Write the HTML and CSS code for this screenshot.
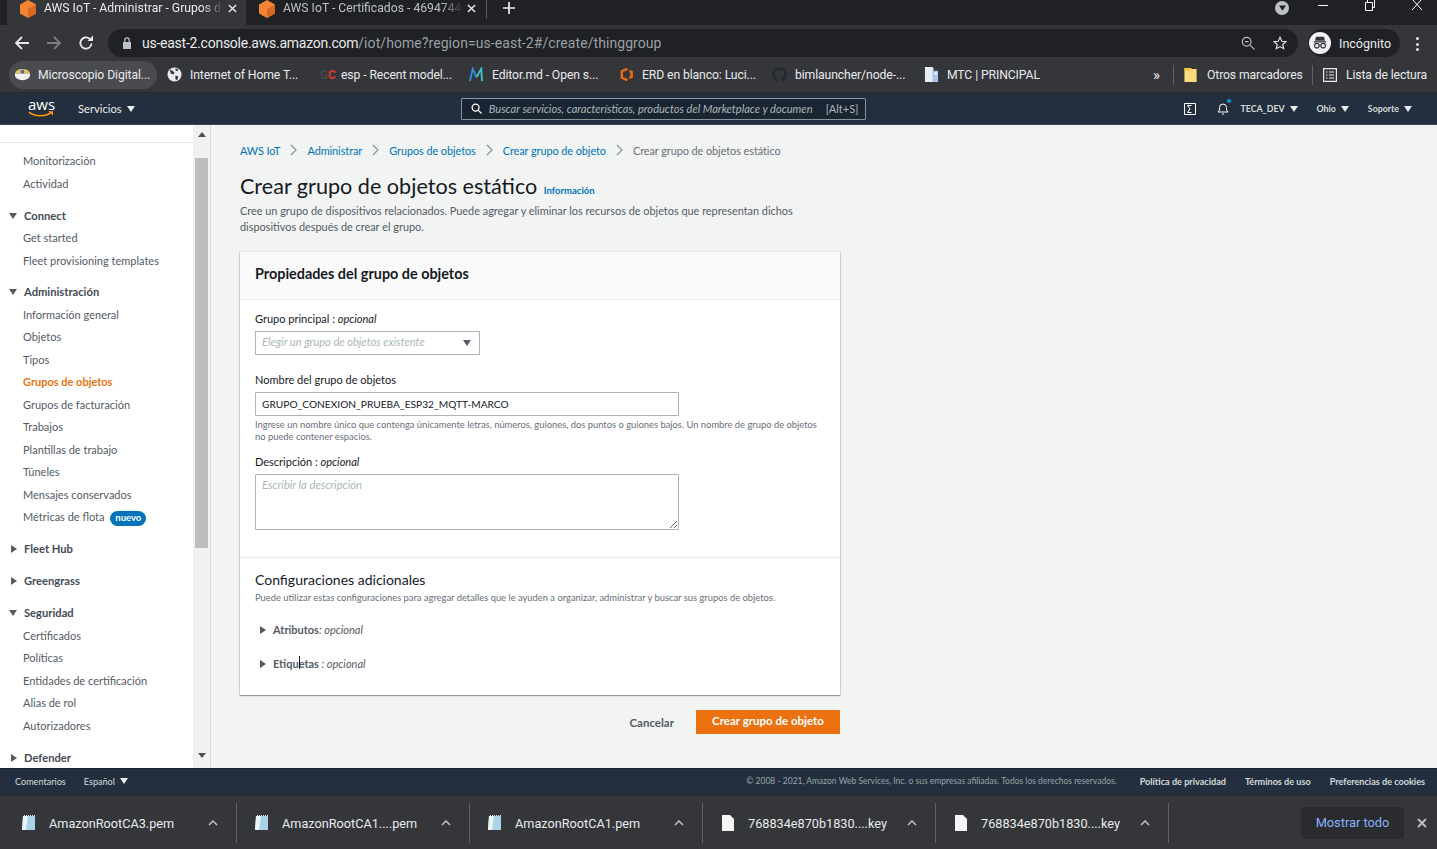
FILE: index.html
```html
<!DOCTYPE html>
<html lang="es">
<head>
    <meta charset="UTF-8">
    <title>AWS IoT - Administrar - Grupos de objetos</title>
    <link rel="stylesheet" href="styles.css">
</head>
<body>
<div id="tabs">
    <div class="tab active">
        <svg class="cube" viewBox="0 0 16 18"><path fill="#f58536" d="M8 0l8 4.500v9L8 18l-8-4.500v-9z"/><path fill="#d9691e" d="M8 9v9l8-4.500v-9z"/></svg>
        <span class="tab-title">AWS IoT - Administrar - Grupos d</span>
        <svg class="tab-x" viewBox="0 0 10 10"><path d="M1 1l8 8M9 1l-8 8"/></svg>
    </div>
    <div class="tab">
        <svg class="cube" viewBox="0 0 16 18"><path fill="#f58536" d="M8 0l8 4.500v9L8 18l-8-4.500v-9z"/><path fill="#d9691e" d="M8 9v9l8-4.500v-9z"/></svg>
        <span class="tab-title">AWS IoT - Certificados - 4694744</span>
        <svg class="tab-x" viewBox="0 0 10 10"><path d="M1 1l8 8M9 1l-8 8"/></svg>
    </div>
    <span class="tab-sep"></span>
    <svg class="tab-plus" viewBox="0 0 12 12"><path d="M6 0v12M0 6h12"/></svg>
    <span class="spacer"></span>
    <span class="tab-search"><svg viewBox="0 0 8 6"><path fill="#202124" d="M0 0h8L4 6z"/></svg></span>
    <svg class="win-btn" viewBox="0 0 12 12"><path d="M1 6.500h10"/></svg>
    <svg class="win-btn" viewBox="0 0 12 12"><path d="M1.500 3.500h7v8h-7zM3.500 3.500V.5h7v8h-2"/></svg>
    <svg class="win-btn last" viewBox="0 0 12 12"><path d="M1 0l10 11M11 0L1 11"/></svg>
</div>

<div id="toolbar">
    <svg class="tool" viewBox="0 0 16 16"><path stroke="#e8eaed" d="M15 8H2M8 2L2 8l6 6"/></svg>
    <svg class="tool" viewBox="0 0 16 16"><path stroke="#7c7e81" d="M1 8h13M8 2l6 6-6 6"/></svg>
    <svg class="tool" viewBox="0 0 16 16"><path stroke="#e8eaed" d="M13.500 8.500A5.600 5.600 0 1 1 11.800 4"/><path fill="#e8eaed" d="M9.500 6H15V.5z"/></svg>
    <div id="omnibox">
        <svg class="lock" viewBox="0 0 10 12"><path fill="#bdc1c6" d="M1 5h8v7H1z"/><path fill="none" stroke="#bdc1c6" stroke-width="1.300" d="M2.800 5V3a2.200 2.200 0 0 1 4.400 0v2"/></svg>
        <span class="url"><b>us-east-2.console.aws.amazon.com</b>/iot/home?region=us-east-2#/create/thinggroup</span>
        <span class="spacer"></span>
        <svg class="omni-icon" viewBox="0 0 16 16"><circle cx="6.500" cy="6.500" r="5"/><path d="M10.500 10.500l5 5M4.500 6.500h4"/></svg>
        <svg class="omni-icon star" viewBox="0 0 16 16"><path d="M8 1.500l2 4.500 4.800.5-3.600 3.200 1 4.800L8 12.100l-4.200 2.400 1-4.800L1.200 6.500 6 6z"/></svg>
    </div>
    <div id="incognito">
        <span class="inc-face"><svg viewBox="0 0 20 20"><path fill="#35363a" d="M3 8h14v1.500H3zM5.500 3h9l1 4.500h-11z"/><circle cx="6.500" cy="13" r="2.500" fill="none" stroke="#35363a" stroke-width="1.300"/><circle cx="13.500" cy="13" r="2.500" fill="none" stroke="#35363a" stroke-width="1.300"/><path stroke="#35363a" d="M9 13h2"/></svg></span>
        Incógnito
    </div>
    <span class="dots"><i></i><i></i><i></i></span>
</div>

<div id="bookmarks">
    <div class="bm first">
        <svg class="bm-ico" viewBox="0 0 16 16"><path fill="#e8c25a" d="M0 7a8 5 0 0 1 16 0z"/><path fill="#f4f4f4" d="M0 7h16v2a8 5 0 0 1-16 0z"/><circle cx="8" cy="5" r="2" fill="#4a6fb0"/></svg>
        <span>Microscopio Digital...</span>
    </div>
    <div class="bm">
        <svg class="bm-ico" viewBox="0 0 16 16"><circle cx="8" cy="8" r="7.500" fill="#e8eaed"/><path fill="#35363a" d="M3 3l3 1 2 2-1 2-3-1zM9 9l3 1-1 4-2-1zM9 1.500l3 1-1 2-2-1z"/></svg>
        <span>Internet of Home T...</span>
    </div>
    <div class="bm short">
        <span class="gc"><em>G</em>C</span>
        <span>esp - Recent model...</span>
    </div>
    <div class="bm editor">
        <svg class="bm-ico" viewBox="0 0 16 16"><path fill="none" stroke="#2d8fe0" stroke-width="2" d="M1 15L4 2l4 9"/><path fill="none" stroke="#3fc4c4" stroke-width="2" d="M8 11l5-9 1 13"/></svg>
        <span>Editor.md - Open s...</span>
    </div>
    <div class="bm erd">
        <svg class="bm-ico" viewBox="0 0 16 16"><path fill="none" stroke="#ee6c14" stroke-width="2.600" d="M9 2L3 4.500v7L9 14M11 4.500l2.500 1v5l-2.500 1"/></svg>
        <span>ERD en blanco: Luci...</span>
    </div>
    <div class="bm">
        <svg class="bm-ico" viewBox="0 0 16 16"><path fill="#24292e" d="M8 0a8 8 0 0 0-2.500 15.600c.4 0 .5-.2.500-.4v-1.400c-2.200.5-2.700-1-2.700-1-.4-.9-.9-1.200-.9-1.200-.7-.5.100-.5.100-.5.800.1 1.200.8 1.200.8.700 1.200 1.900.9 2.300.7.100-.5.300-.9.500-1.100-1.800-.2-3.600-.9-3.600-4 0-.9.300-1.600.8-2.100-.1-.2-.4-1 .1-2.100 0 0 .7-.2 2.200.8a7.500 7.500 0 0 1 4 0c1.500-1 2.200-.8 2.200-.8.500 1.100.2 1.900.1 2.100.5.600.8 1.300.8 2.100 0 3.100-1.900 3.700-3.600 3.900.3.300.6.800.6 1.500v2.200c0 .2.100.5.500.4A8 8 0 0 0 8 0z"/></svg>
        <span>bimlauncher/node-...</span>
    </div>
    <div class="bm">
        <svg class="bm-ico" viewBox="0 0 16 16"><path fill="#e8eef6" d="M1 0h8l1 1v15H1z"/><path fill="#a9c4e4" d="M9 4h6v12H9z"/><path fill="#fff" d="M11 6h3v2h-3z"/></svg>
        <span>MTC | PRINCIPAL</span>
    </div>
    <span class="spacer"></span>
    <span class="chev">»</span>
    <span class="bm-sep"></span>
    <svg class="bm-ico folder" viewBox="0 0 14 16"><path fill="#fbdc7a" d="M0 1h7l1 1h5v14H0z"/><path fill="#f4c542" d="M0 1h7v3H0z"/></svg>
    <span class="bm-side">Otros marcadores</span>
    <span class="bm-sep"></span>
    <svg class="bm-ico reading" viewBox="0 0 14 14"><path fill="none" stroke="#e8eaed" stroke-width="1.200" d="M.6.600h12.800v12.800H.6zM3 4h1.500M6 4h5M3 7h1.500M6 7h5M3 10h1.500M6 10h5"/></svg>
    <span class="bm-side last">Lista de lectura</span>
</div>

<div id="awsnav">
    <div class="aws-logo">
        <span>aws</span>
        <svg viewBox="0 0 26 7"><path fill="none" stroke="#f90" stroke-width="1.500" d="M1 1c6 5 17 5 23 .5"/><path fill="#f90" d="M21 0h5v4.500z"/></svg>
    </div>
    <span class="nav-link services">Servicios</span><span class="caret big"></span>
    <div class="searchbox">
        <svg viewBox="0 0 12 12"><circle cx="5" cy="5" r="3.800"/><path d="M8 8l3.500 3.500"/></svg>
        <span class="search-text">Buscar servicios, características, productos del Marketplace y documen</span>
        <span class="search-key">[Alt+S]</span>
    </div>
    <span class="spacer"></span>
    <svg class="nav-ico" viewBox="0 0 12 12"><path fill="none" stroke="#fff" d="M.5.5h11v11H.5zM3.500 2.500h4M3.500 2.500L6 6 3.500 9.500h4"/></svg>
    <span class="bell">
        <svg class="nav-ico" viewBox="0 0 12 13"><path fill="none" stroke="#fff" d="M1 10h10l-1.500-2V5.500a3.500 3.500 0 0 0-7 0V8zM5 12h2"/></svg>
        <i class="bell-dot"></i>
    </span>
    <span class="nav-small user">TECA_DEV</span><span class="caret"></span>
    <span class="nav-small region">Ohio</span><span class="caret"></span>
    <span class="nav-small support">Soporte</span><span class="caret"></span>
</div>

<div id="main">
    <div id="sidebar">
        <div class="side-top"></div>
        <ul class="side-list">
            <li>Monitorización</li>
            <li>Actividad</li>
            <li class="head open">Connect</li>
            <li>Get started</li>
            <li>Fleet provisioning templates</li>
            <li class="head open">Administración</li>
            <li>Información general</li>
            <li>Objetos</li>
            <li>Tipos</li>
            <li class="current">Grupos de objetos</li>
            <li>Grupos de facturación</li>
            <li>Trabajos</li>
            <li>Plantillas de trabajo</li>
            <li>Túneles</li>
            <li>Mensajes conservados</li>
            <li>Métricas de flota <span class="badge">nuevo</span></li>
            <li class="head closed">Fleet Hub</li>
            <li class="head closed">Greengrass</li>
            <li class="head open">Seguridad</li>
            <li>Certificados</li>
            <li>Políticas</li>
            <li>Entidades de certificación</li>
            <li>Alias de rol</li>
            <li>Autorizadores</li>
            <li class="head closed">Defender</li>
        </ul>
    </div>
    <div id="scroll">
        <span class="arrow up"></span>
        <span class="thumb"></span>
        <span class="arrow down"></span>
    </div>

    <div id="content">
        <div class="crumbs">
            <a>AWS IoT</a><svg viewBox="0 0 7 12"><path d="M1 1l5 5-5 5"/></svg>
            <a>Administrar</a><svg viewBox="0 0 7 12"><path d="M1 1l5 5-5 5"/></svg>
            <a>Grupos de objetos</a><svg viewBox="0 0 7 12"><path d="M1 1l5 5-5 5"/></svg>
            <a>Crear grupo de objeto</a><svg viewBox="0 0 7 12"><path d="M1 1l5 5-5 5"/></svg>
            <span>Crear grupo de objetos estático</span>
        </div>
        <h1>Crear grupo de objetos estático <a class="info">Información</a></h1>
        <p class="intro">Cree un grupo de dispositivos relacionados. Puede agregar y eliminar los recursos de objetos que representan dichos dispositivos después de crear el grupo.</p>

        <div class="card">
            <div class="card-head">Propiedades del grupo de objetos</div>
            <div class="card-body">
                <label>Grupo principal : <i>opcional</i></label>
                <div class="select"><span>Elegir un grupo de objetos existente</span><b class="caret dark"></b></div>
                <label class="name-label">Nombre del grupo de objetos</label>
                <input class="field" type="text" value="GRUPO_CONEXION_PRUEBA_ESP32_MQTT-MARCO">
                <p class="help">Ingrese un nombre único que contenga únicamente letras, números, guiones, dos puntos o guiones bajos. Un nombre de grupo de objetos no puede contener espacios.</p>
                <label class="desc-label">Descripción : <i>opcional</i></label>
                <textarea class="field area" placeholder="Escribir la descripción"></textarea>
            </div>
            <div class="card-extra">
                <h2>Configuraciones adicionales</h2>
                <p class="help">Puede utilizar estas configuraciones para agregar detalles que le ayuden a organizar, administrar y buscar sus grupos de objetos.</p>
                <div class="expander attrs"><b class="tri"></b><strong>Atributos</strong><i>: opcional</i></div>
                <div class="expander tags"><b class="tri"></b><strong>Etiquetas</strong><i>&nbsp;: opcional</i><span class="ibeam"></span></div>
            </div>
        </div>

        <div class="actions">
            <a class="cancel">Cancelar</a>
            <a class="primary">Crear grupo de objeto</a>
        </div>
    </div>
</div>

<div id="footer">
    <span class="foot-link">Comentarios</span>
    <span class="foot-link lang">Español</span><span class="caret"></span>
    <span class="spacer"></span>
    <span class="copy">© 2008 - 2021, Amazon Web Services, Inc. o sus empresas afiliadas. Todos los derechos reservados.</span>
    <span class="foot-link strong">Política de privacidad</span>
    <span class="foot-link strong">Términos de uso</span>
    <span class="foot-link strong">Preferencias de cookies</span>
</div>

<div id="downloads">
    <div class="dl">
        <svg class="dl-ico" viewBox="0 0 16 18"><path fill="#a9d3e6" d="M2 2h12v14H1z"/><path fill="#e9f4f9" d="M2 2h5L5 16H1z"/><path stroke="#dfe3e6" stroke-dasharray="1 1" d="M3 1.500h11"/></svg>
        <span class="dl-name">AmazonRootCA3.pem</span>
        <svg class="dl-up" viewBox="0 0 10 6"><path d="M1 5l4-4 4 4"/></svg>
    </div>
    <div class="dl">
        <svg class="dl-ico" viewBox="0 0 16 18"><path fill="#a9d3e6" d="M2 2h12v14H1z"/><path fill="#e9f4f9" d="M2 2h5L5 16H1z"/><path stroke="#dfe3e6" stroke-dasharray="1 1" d="M3 1.500h11"/></svg>
        <span class="dl-name">AmazonRootCA1....pem</span>
        <svg class="dl-up" viewBox="0 0 10 6"><path d="M1 5l4-4 4 4"/></svg>
    </div>
    <div class="dl">
        <svg class="dl-ico" viewBox="0 0 16 18"><path fill="#a9d3e6" d="M2 2h12v14H1z"/><path fill="#e9f4f9" d="M2 2h5L5 16H1z"/><path stroke="#dfe3e6" stroke-dasharray="1 1" d="M3 1.500h11"/></svg>
        <span class="dl-name">AmazonRootCA1.pem</span>
        <svg class="dl-up" viewBox="0 0 10 6"><path d="M1 5l4-4 4 4"/></svg>
    </div>
    <div class="dl">
        <svg class="dl-ico" viewBox="0 0 16 18"><path fill="#f4f5f5" d="M2 1h8l4 4v12H2z"/></svg>
        <span class="dl-name">768834e870b1830....key</span>
        <svg class="dl-up" viewBox="0 0 10 6"><path d="M1 5l4-4 4 4"/></svg>
    </div>
    <div class="dl">
        <svg class="dl-ico" viewBox="0 0 16 18"><path fill="#f4f5f5" d="M2 1h8l4 4v12H2z"/></svg>
        <span class="dl-name">768834e870b1830....key</span>
        <svg class="dl-up" viewBox="0 0 10 6"><path d="M1 5l4-4 4 4"/></svg>
    </div>
    <span class="spacer"></span>
    <span class="show-all">Mostrar todo</span>
    <svg class="dl-close" viewBox="0 0 10 10"><path d="M1 1l8 8M9 1l-8 8"/></svg>
</div>
</body>
</html>
```

FILE: styles.css
```css
* {
    box-sizing: border-box;
}

html, body {
    margin: 0;
    padding: 0;
    height: 849px;
    overflow: hidden;
}

body {
    font-family: Roboto, "Liberation Sans", sans-serif;
    font-size: 13px;
    color: #e8eaed;
    background: #f2f3f3;
    width: 1437px;
}

.spacer {
    flex: 1;
}

/* browser tabs */
#tabs {
    height: 25px;
    background: #202124;
    display: flex;
    align-items: flex-start;
}

.tab {
    width: 239px;
    height: 25px;
    display: flex;
    align-items: center;
    padding: 0 0 9px 13px;
    color: #bdc1c6;
    font-size: 12.200px;
}

.tab.active {
    margin-left: 7px;
    background: #35363a;
    color: #e8eaed;
}

.cube {
    width: 16px;
    height: 18px;
    margin-right: 8px;
    flex: none;
    margin-top: 2px;
}

.tab-title {
    width: 180px;
    white-space: nowrap;
    -webkit-mask-image: linear-gradient(to right, #000 88%, transparent);
    mask-image: linear-gradient(to right, #000 88%, transparent);
}

.tab-x {
    width: 9px;
    height: 9px;
    margin-left: 4px;
    fill: none;
    stroke: #e8eaed;
    stroke-width: 1.600;
}

.tab-sep {
    width: 1px;
    height: 18px;
    background: #5f6368;
    margin-left: 1px;
}

.tab-plus {
    width: 12px;
    height: 12px;
    margin: 2px 0 0 16px;
    fill: none;
    stroke: #e8eaed;
    stroke-width: 1.700;
}

.tab-search {
    width: 14px;
    height: 14px;
    border-radius: 50%;
    background: #bdc1c6;
    margin: 1px 28px 0 0;
    display: flex;
    align-items: center;
    justify-content: center;
}

.tab-search svg {
    width: 7px;
    height: 6px;
}

.win-btn {
    width: 12px;
    height: 12px;
    margin-right: 35px;
    fill: none;
    stroke: #fff;
    stroke-width: 1;
    margin-top: -1px;
}

.win-btn.last {
    margin-right: 14px;
}

/* address bar */
#toolbar {
    height: 32px;
    background: #35363a;
    display: flex;
    align-items: flex-start;
    padding: 4px 0 0 14px;
}

.tool {
    width: 16px;
    height: 16px;
    margin: 6px 16px 0 0;
    fill: none;
    stroke-width: 1.800;
}

#omnibox {
    width: 1190px;
    height: 28px;
    margin-left: -2px;
    background: #202124;
    border-radius: 14px;
    display: flex;
    align-items: center;
    padding: 0 9px 0 14px;
}

.lock {
    width: 10px;
    height: 12px;
    margin-right: 10px;
}

.url {
    font-size: 14px;
    color: #9aa0a6;
    white-space: nowrap;
    letter-spacing: .07px;
}

.url b {
    font-weight: 400;
    color: #e8eaed;
    letter-spacing: -.25px;
}

.omni-icon {
    width: 14px;
    height: 14px;
    margin-right: 18px;
    fill: none;
    stroke: #bdc1c6;
    stroke-width: 1.300;
}

.omni-icon.star {
    margin-right: 2px;
    stroke: #e8eaed;
}

#incognito {
    width: 92px;
    height: 28px;
    margin-left: 10px;
    background: #202124;
    border-radius: 14px;
    display: flex;
    align-items: center;
    font-size: 12.500px;
    padding-left: 1px;
}

.inc-face {
    width: 22px;
    height: 22px;
    border-radius: 50%;
    background: #f1f3f4;
    margin-right: 8px;
    display: flex;
    align-items: center;
    justify-content: center;
}

.inc-face svg {
    width: 18px;
    height: 18px;
}

.dots {
    display: flex;
    flex-direction: column;
    gap: 2.500px;
    margin: 8px 0 0 16px;
}

.dots i {
    width: 3px;
    height: 3px;
    border-radius: 50%;
    background: #e8eaed;
}

/* bookmarks bar */
#bookmarks {
    height: 36px;
    background: #35363a;
    display: flex;
    align-items: center;
    font-size: 12.200px;
    border-bottom: 1px solid #2a2b2e;
    padding-left: 15px;
}

.bm {
    width: 152px;
    display: flex;
    align-items: center;
    position: relative;
    white-space: nowrap;
    letter-spacing: -.1px;
}

.bm.short {
    width: 150px;
}

.bm.editor {
    width: 150px;
}

.bm.erd {
    width: 153px;
}

.bm.first {
    margin-left: -6px;
    padding: 0 0 0 6px;
    height: 28px;
    width: 148px;
    background: #4a4b4f;
    border-radius: 14px;
    margin-right: 10px;
}

.bm-ico {
    width: 15px;
    height: 15px;
    margin-right: 8px;
    flex: none;
}

.gc {
    width: 17px;
    margin-right: 4px;
    margin-left: 1px;
    color: #e2372b;
    font-weight: 700;
    font-size: 12px;
}

.gc em {
    font-style: normal;
    color: #46484c;
}

.chev {
    font-size: 15px;
    margin-right: 13px;
}

.bm-sep {
    width: 1px;
    height: 20px;
    background: #5f6368;
}

.folder {
    margin: 0 9px 0 10px;
    width: 14px;
}

.reading {
    margin: 0 9px 0 10px;
    width: 14px;
    height: 14px;
}

.bm-side {
    width: 105px;
    white-space: nowrap;
    letter-spacing: -.12px;
}

.bm-side.last {
    width: 91px;
}

/* console nav */
#awsnav {
    height: 32px;
    background: #232f3e;
    border-bottom: 1px solid #3a4553;
    display: flex;
    align-items: center;
    font-family: Lato, "Liberation Sans", sans-serif;
    color: #eaeded;
    padding-left: 28px;
}

.aws-logo {
    width: 50px;
    height: 24px;
    font-size: 15px;
    line-height: 15px;
    color: #fff;
    font-family: "Open Sans", sans-serif;
}

.aws-logo svg {
    display: block;
    width: 25px;
    height: 7px;
    margin-top: -1px;
}

.nav-link {
    font-size: 11.200px;
}

.caret {
    display: inline-block;
    width: 0;
    height: 0;
    border: 4px solid transparent;
    border-top: 6px solid #eaeded;
    border-bottom: 0;
    margin-left: 5px;
}

.caret.big {
    border-width: 6px 4.500px 0;
}

.searchbox {
    width: 405px;
    height: 22px;
    margin-left: 326px;
    border: 1px solid #879596;
    background: #1a2433;
    display: flex;
    align-items: center;
    padding-left: 9px;
    border-radius: 1px;
}

.searchbox svg {
    width: 11px;
    height: 11px;
    fill: none;
    stroke: #fff;
    stroke-width: 1.400;
    margin-right: 7px;
}

.search-text {
    width: 328px;
    overflow: hidden;
    white-space: nowrap;
    font-style: italic;
    font-size: 11.100px;
    color: #aab7b8;
}

.search-key {
    margin-left: 9px;
    font-size: 11px;
    color: #aab7b8;
}

.nav-ico {
    width: 12px;
    height: 12px;
    flex: none;
    display: block;
}

.bell {
    margin-left: 21px;
    margin-right: 11px;
    position: relative;
}

.bell .nav-ico {
    height: 13px;
}

.bell-dot {
    position: absolute;
    top: -3px;
    right: -2px;
    width: 4px;
    height: 4px;
    border-radius: 50%;
    background: #00a1c9;
}

.nav-small {
    font-size: 8.800px;
    font-weight: 700;
    color: #d5dbdb;
}

.region,
.support {
    margin-left: 19px;
}

.support + .caret {
    margin-right: 25px;
}

/* page */
#main {
    height: 643px;
    display: flex;
    font-family: Lato, "Liberation Sans", sans-serif;
    color: #545b64;
    overflow: hidden;
}

#sidebar {
    width: 193px;
    background: #fff;
    flex: none;
    overflow: hidden;
    height: 643px;
}

.side-top {
    height: 18px;
    border-bottom: 1px solid #e6e8e8;
}

.side-list {
    list-style: none;
    margin: 0;
    padding: 7.200px 0 0 23px;
    font-size: 11px;
    color: #545b64;
}

.side-list li {
    height: 22.500px;
    line-height: 22.500px;
    white-space: nowrap;
    position: relative;
}

.side-list .head {
    margin-top: 9.400px;
    font-weight: 700;
    font-size: 11.200px;
    color: #444b55;
    margin-left: 1px;
}

.side-list .head::before {
    content: "";
    position: absolute;
    top: 8px;
    left: -15px;
    border-style: solid;
    border-color: transparent;
}

.side-list .open::before {
    border-width: 6px 4.500px 0;
    border-top-color: #545b64;
}

.side-list .closed::before {
    border-width: 4.500px 0 4.500px 6px;
    border-left-color: #545b64;
    top: 7px;
    left: -13px;
}

.side-list .current {
    color: #ec7211;
    font-weight: 700;
}

.badge {
    display: inline-block;
    margin-left: 3px;
    padding: 0 5px;
    height: 15px;
    line-height: 14px;
    border-radius: 8px;
    background: #0073bb;
    color: #fff;
    font-size: 9.500px;
    font-weight: 700;
}

#scroll {
    width: 18px;
    height: 643px;
    background: #f1f1f1;
    border-right: 1px solid #d5dbdb;
    flex: none;
    display: flex;
    flex-direction: column;
    align-items: center;
}

.thumb {
    width: 13px;
    height: 390px;
    background: #bdbdbd;
    margin-top: 21px;
}

.arrow {
    width: 0;
    height: 0;
    border: 4px solid transparent;
    flex: none;
}

.arrow.up {
    border-top: 0;
    border-bottom: 5px solid #505050;
    margin-top: 7px;
}

.arrow.down {
    border-bottom: 0;
    border-top: 5px solid #505050;
    margin-top: 205px;
}

#content {
    width: 600px;
    margin-left: 29px;
    padding-top: 16px;
    flex: none;
}

.crumbs {
    height: 18px;
    display: flex;
    align-items: center;
    font-size: 10.900px;
    letter-spacing: -.07px;
    color: #687078;
    white-space: nowrap;
}

.crumbs a {
    color: #0073bb;
}

.crumbs svg {
    width: 7px;
    height: 12px;
    margin: 0 10px;
    fill: none;
    stroke: #879596;
    stroke-width: 1.200;
}

h1 {
    margin: 13px 0 0;
    height: 28px;
    line-height: 28px;
    font-size: 21.600px;
    font-weight: 400;
    color: #16191f;
    white-space: nowrap;
}

.info {
    font-size: 9.500px;
    font-weight: 700;
    color: #0073bb;
    margin-left: 1px;
}

.intro {
    margin: 3px 0 0;
    font-size: 10.900px;
    line-height: 16px;
    color: #545b64;
    width: 590px;
}

.card {
    margin-top: 17px;
    width: 600px;
    background: #fff;
    box-shadow: 0 1px 1px 0 rgba(0, 28, 36, .4), 1px 0 1px 0 rgba(0, 28, 36, .1), -1px 0 1px 0 rgba(0, 28, 36, .1);
}

.card-head {
    height: 48px;
    line-height: 44px;
    padding-left: 15px;
    background: #fafafa;
    border-bottom: 1px solid #eaeded;
    color: #16191f;
    font-size: 14.400px;
    font-weight: 700;
}

.card-body {
    padding: 11px 15px 0;
    height: 258px;
    border-bottom: 1px solid #eaeded;
}

label {
    display: block;
    height: 16px;
    line-height: 16px;
    font-size: 11px;
    color: #16191f;
}

.select {
    margin-top: 4px;
    width: 225px;
    height: 24px;
    border: 1px solid #aab7b8;
    display: flex;
    align-items: center;
    justify-content: space-between;
    padding: 0 8px 3px 6px;
    font-style: italic;
    font-size: 11.100px;
    color: #aab7b8;
}

.caret.dark {
    border-top-color: #545b64;
    border-width: 6px 4.500px 0;
    margin-top: 3px;
}

.name-label {
    margin-top: 17px;
}

.field {
    display: block;
    margin-top: 4px;
    width: 424px;
    height: 24px;
    border: 1px solid #aab7b8;
    padding: 0 6px 1px;
    font-family: Lato, "Liberation Sans", sans-serif;
    font-size: 10.200px;
    color: #16191f;
    outline: none;
    border-radius: 1px;
}

.area {
    height: 56px;
    padding: 3px 6px;
    resize: both;
    font-size: 11.200px;
}

.area::placeholder {
    color: #aab7b8;
    font-style: italic;
}

.help {
    margin: 3px 0 0;
    font-size: 9.370px;
    line-height: 11.500px;
    color: #687078;
}

.desc-label {
    margin-top: 12px;
}

.card-extra {
    padding: 13px 15px 0;
    height: 137px;
}

h2 {
    margin: 0;
    height: 18px;
    line-height: 18px;
    font-size: 14px;
    font-weight: 400;
    color: #16191f;
}

.expander {
    height: 16px;
    line-height: 16px;
    display: flex;
    align-items: center;
    padding-left: 5px;
    font-size: 11px;
    color: #545b64;
    position: relative;
}

.expander strong {
    margin-left: 7px;
}

.attrs {
    margin-top: 18px;
}

.tags {
    margin-top: 18px;
}

.tri {
    width: 0;
    height: 0;
    border: 4px solid transparent;
    border-left: 6px solid #545b64;
    border-right: 0;
}

.ibeam {
    position: absolute;
    left: 44px;
    top: 0;
    width: 1px;
    height: 13px;
    background: #16191f;
}

.actions {
    margin-top: 15px;
    display: flex;
    justify-content: flex-end;
    align-items: center;
    font-size: 11.500px;
    font-weight: 700;
}

.cancel {
    color: #545b64;
    margin-right: 22px;
}

.primary {
    width: 144px;
    height: 24px;
    line-height: 22px;
    text-align: center;
    background: #ec7211;
    color: #fff;
}

/* console footer */
#footer {
    height: 27px;
    background: #232f3e;
    display: flex;
    align-items: center;
    padding: 0 12px 2px 15px;
    font-family: Lato, "Liberation Sans", sans-serif;
    font-size: 9.100px;
    color: #d5dbdb;
    border-top: 1px solid #1a232f;
}

.foot-link {
    white-space: nowrap;
}

.lang {
    margin-left: 18px;
}

.copy {
    color: #95a5a6;
    font-size: 8.500px;
    margin-right: 4px;
}

.strong {
    font-weight: 700;
    margin-left: 19px;
}

/* downloads shelf */
#downloads {
    height: 54px;
    background: #35363a;
    display: flex;
    align-items: center;
    padding-left: 4px;
    border-top: 1px solid #2a2b2e;
}

.dl {
    width: 233px;
    height: 40px;
    display: flex;
    align-items: center;
    padding-left: 17px;
    border-right: 1px solid #5f6368;
}

.dl-ico {
    width: 16px;
    height: 18px;
    margin-right: 12px;
    flex: none;
}

.dl-name {
    font-size: 12.700px;
    width: 156px;
    padding-top: 1px;
    white-space: nowrap;
    color: #e8eaed;
}

.dl-up {
    width: 10px;
    height: 6px;
    margin-left: 3px;
    fill: none;
    stroke: #bdc1c6;
    stroke-width: 1.500;
}

.show-all {
    width: 103px;
    height: 32px;
    line-height: 31px;
    text-align: center;
    background: #2a2b2f;
    border-radius: 4px;
    color: #8ab4f8;
    font-size: 12.800px;
    margin-right: 13px;
}

.dl-close {
    width: 10px;
    height: 10px;
    margin-right: 10px;
    fill: none;
    stroke: #bdc1c6;
    stroke-width: 1.800;
}
```
